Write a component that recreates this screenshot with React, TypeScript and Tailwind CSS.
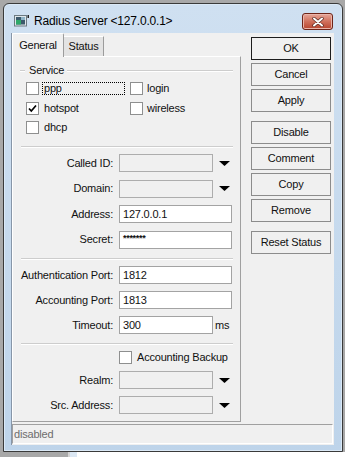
import React from "react";

const Arrow = () => (
    <svg width="11" height="5" viewBox="0 0 11 5" className="ml-[6px] shrink-0">
        <polygon points="0,0 11,0 5.5,5" fill="#000" />
    </svg>
);

function Check({ checked = false }: { checked?: boolean }) {
    return (
        <div className="w-[13px] h-[13px] shrink-0 border border-[#8e8f8f] bg-white flex items-center justify-center">
            {checked && (
                <svg width="11" height="11" viewBox="0 0 11 11">
                    <path d="M2 5.5 L4.3 8 L9 2.5" fill="none" stroke="#000" strokeWidth="1.7" />
                </svg>
            )}
        </div>
    );
}

function Field({
    label,
    value,
    kind,
    suffix,
}: {
    label: string;
    value?: React.ReactNode;
    kind: "combo" | "text" | "short";
    suffix?: string;
}) {
    const box =
        kind === "combo"
            ? "w-[94px] bg-[#f0f0f0] border-[#adadad]"
            : kind === "short"
                ? "w-[94px] bg-white border-[#a3a3a3]"
                : "w-[113px] bg-white border-[#a3a3a3]";
    return (
        <div className="flex items-center h-[18px]">
            <div className="w-[100px] text-right whitespace-nowrap">{label}</div>
            <div className={`ml-[6px] h-[18px] border ${box} pl-[3px] flex items-center`}>{value}</div>
            {kind === "combo" && <Arrow />}
            {suffix && <span className="ml-[2px]">{suffix}</span>}
        </div>
    );
}

const Sep = ({ className = "" }: { className?: string }) => (
    <div className={`ml-[8px] mr-[7px] h-[2px] border-t border-[#cdcdcd] border-b border-b-white ${className}`} />
);

const buttons = [
    { label: "OK", cls: "border-[#1c1c1c]" },
    { label: "Cancel", cls: "mt-[3px] border-[#8c8c8c]" },
    { label: "Apply", cls: "mt-[3px] border-[#8c8c8c]" },
    { label: "Disable", cls: "mt-[9px] border-[#8c8c8c]" },
    { label: "Comment", cls: "mt-[3px] border-[#8c8c8c]" },
    { label: "Copy", cls: "mt-[3px] border-[#8c8c8c]" },
    { label: "Remove", cls: "mt-[3px] border-[#8c8c8c]" },
    { label: "Reset Status", cls: "mt-[9px] border-[#8c8c8c]" },
];

export default function App() {
    return (
        <div className="w-[345px] h-[457px] bg-[#a8a8a8] overflow-hidden flex flex-col font-['Liberation_Sans',Arial,sans-serif] text-[11px] tracking-[-0.2px] text-[#111]">
            <div className="pt-[3px] pl-[3px]">
                {/* window frame */}
                <div className="w-[340px] h-[449px] rounded-t-[6px] border border-[#3a3a3a] bg-gradient-to-b from-[#cfe0f1] to-[#bed4ea] shadow-[inset_0_0_0_1px_#dbe9f6] flex flex-col">
                    <div className="h-[29px] flex items-start pl-[10px] pr-[9px]">
                        <svg width="15" height="12" viewBox="0 0 15 12" className="mt-[11px]">
                            <rect x="0.5" y="0.5" width="12" height="10.5" fill="#dfe6ea" stroke="#6c7a82" />
                            <rect x="2" y="2" width="9" height="7.5" fill="#3c5a6c" />
                            <rect x="2" y="5" width="5" height="4.5" fill="#2fa86a" />
                            <rect x="7" y="2" width="4" height="3" fill="#8fb4c8" />
                            <rect x="13.5" y="0" width="1.5" height="3" fill="#222" />
                        </svg>
                        <div className="ml-[5px] mt-[9px] h-[17px] leading-[17px] text-[12px] tracking-[-0.2px] text-black whitespace-nowrap">
                            Radius Server &lt;127.0.0.1&gt;
                        </div>
                        <div className="ml-auto mt-[9px] w-[31px] h-[17px] rounded-[3px] border border-[#6e2418] bg-gradient-to-b from-[#e6a699] via-[#d0705c] to-[#b8442e] flex items-center justify-center shadow-[inset_0_0_0_1px_#eab5aa]">
                            <svg width="12" height="10" viewBox="0 0 12 10">
                                <path d="M2 1.5 L10 8.5 M10 1.5 L2 8.5" stroke="#5a2a22" strokeWidth="3.4" strokeLinecap="round" />
                                <path d="M2 1.5 L10 8.5 M10 1.5 L2 8.5" stroke="#fff" strokeWidth="2" strokeLinecap="round" />
                            </svg>
                        </div>
                    </div>

                    <div className="flex pl-[7px]">
                        {/* client area */}
                        <div className="w-[323px] h-[412px] bg-[#f0f0f0] border-l border-[#8796a8] flex flex-col">
                            <div className="flex h-[389px]">
                                <div className="w-[229px] flex flex-col">
                                    <div className="h-[23px] flex items-end">
                                        <div className="relative z-10 -mb-px w-[52px] h-[24px] bg-[#f0f0f0] border-t border-l border-white border-r border-r-[#9c9c9c] rounded-t-[2px] flex items-center justify-center pb-px">
                                            General
                                        </div>
                                        <div className="w-[40px] h-[20px] bg-[#e3e3e3] border-t border-white border-r border-r-[#9c9c9c] flex items-center justify-center">
                                            Status
                                        </div>
                                    </div>
                                    <div className="h-[366px] border-t border-l border-white border-r border-r-[#a0a0a0] border-b border-b-[#a0a0a0] flex flex-col">
                                        <div className="mt-[7px] h-[13px] flex items-center pl-[7px] pr-[7px]">
                                            <div className="w-[5px] h-[2px] border-t border-[#cdcdcd] border-b border-b-white" />
                                            <span className="ml-[4px]">Service</span>
                                            <div className="ml-[3px] flex-1 h-[2px] border-t border-[#cdcdcd] border-b border-b-white" />
                                        </div>
                                        <div className="mt-[5px] flex flex-col gap-[6.5px] pl-[13px]">
                                            <div className="h-[13px] flex items-center">
                                                <Check />
                                                <div className="ml-[3px] w-[83px] h-[13px] border border-dotted border-black leading-[11px] pl-px">
                                                    ppp
                                                </div>
                                                <div className="ml-[5px]"><Check /></div>
                                                <span className="ml-[4px]">login</span>
                                            </div>
                                            <div className="h-[13px] flex items-center">
                                                <Check checked />
                                                <div className="ml-[3px] w-[83px] pl-[2px]">hotspot</div>
                                                <div className="ml-[5px]"><Check /></div>
                                                <span className="ml-[4px]">wireless</span>
                                            </div>
                                            <div className="h-[13px] flex items-center">
                                                <Check />
                                                <div className="ml-[3px] pl-[2px]">dhcp</div>
                                            </div>
                                        </div>

                                        <Sep className="mt-[12px]" />
                                        <div className="mt-[6px] flex flex-col gap-[7.5px]">
                                            <Field label="Called ID:" kind="combo" />
                                            <Field label="Domain:" kind="combo" />
                                            <Field label="Address:" kind="text" value="127.0.0.1" />
                                            <Field
                                                label="Secret:"
                                                kind="text"
                                                value={<span className="text-[9px] font-bold tracking-[-0.3px] leading-[9px] mb-[3px]">*******</span>}
                                            />
                                        </div>

                                        <Sep className="mt-[9.5px]" />
                                        <div className="mt-[6px] flex flex-col gap-[7px]">
                                            <Field label="Authentication Port:" kind="text" value="1812" />
                                            <Field label="Accounting Port:" kind="text" value="1813" />
                                            <Field label="Timeout:" kind="short" value="300" suffix="ms" />
                                        </div>

                                        <Sep className="mt-[9px]" />
                                        <div className="mt-[6px] flex flex-col gap-[7px]">
                                            <div className="h-[13px] flex items-center pl-[106px]">
                                                <Check />
                                                <span className="ml-[5px]">Accounting Backup</span>
                                            </div>
                                            <Field label="Realm:" kind="combo" />
                                            <Field label="Src. Address:" kind="combo" />
                                        </div>
                                    </div>
                                </div>

                                <div className="ml-[10px] w-[80px] pt-[4px] flex flex-col">
                                    {buttons.map((b) => (
                                        <div
                                            key={b.label}
                                            className={`h-[23px] border bg-[#f0f0f0] flex items-center justify-center ${b.cls}`}
                                        >
                                            {b.label}
                                        </div>
                                    ))}
                                </div>
                            </div>

                            <div className="mt-[2px] mr-px h-[20px] border-t border-l border-[#a0a0a0] border-b border-r border-b-white border-r-white pl-px flex items-center text-[#6d6d6d]">
                                disabled
                            </div>
                        </div>
                    </div>
                </div>
            </div>
            <div className="flex-1 flex">
                <div className="w-[68px] bg-[#a8a8a8]" />
                <div className="w-[2px] bg-[#d4d4d4]" />
                <div className="w-[7px] bg-[#dbe7f3]" />
                <div className="flex-1 bg-white" />
            </div>
        </div>
    );
}
